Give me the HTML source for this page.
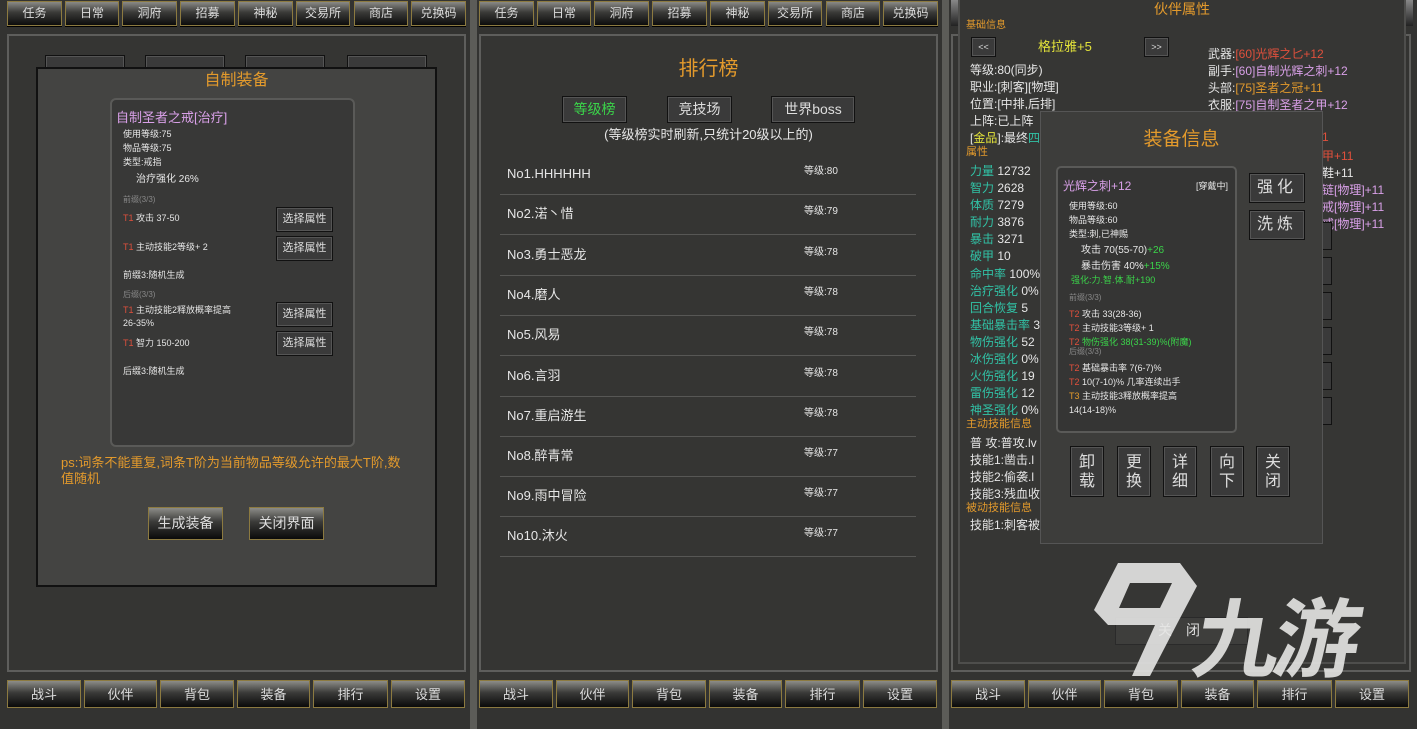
<!DOCTYPE html>
<html><head><meta charset="utf-8"><style>
*{margin:0;padding:0;box-sizing:border-box}
body{width:1417px;height:729px;background:#333331;position:relative;overflow:hidden;font-family:"Liberation Sans","Noto Sans CJK SC",sans-serif;color:#e6e6e6}
div,span.a{position:absolute}
.t{position:absolute;white-space:nowrap;line-height:1}
.sep{top:0;height:729px;width:7px;background:#5c5c58}
.tab{height:25px;background:linear-gradient(#8a8a86,#3a3a38 45%,#0c0c0c);border:1px solid #8c7a40;color:#ddd;font-size:12px;text-align:center;line-height:23px;box-shadow:0 1px 0 #000}
.btab{height:28px;background:linear-gradient(#8c8c88,#3a3a38 45%,#0a0a0a);border:1px solid #8c7a40;color:#ddd;font-size:13px;text-align:center;line-height:28px}
.frame{border:2px solid #5e5e5c;background:#353533}
.gb{background:#3a3a3a;border:1px solid #111;box-shadow:inset 0 0 0 1px #555;color:#ddd;text-align:center}
.or{color:#e39a2c}.pk{color:#d9a0e8}.gr{color:#3bd44a}.cy{color:#31c2a6}.rd{color:#e0503c}.yl{color:#e2e23a}
</style></head><body>

<div class="sep" style="left:470px"></div>
<div class="sep" style="left:942px"></div>

<!-- ================= PANEL 1 ================= -->
<div class="tab" style="left:7px;top:1px;width:55px">任务</div>
<div class="tab" style="left:65px;top:1px;width:54px">日常</div>
<div class="tab" style="left:122px;top:1px;width:55px">洞府</div>
<div class="tab" style="left:180px;top:1px;width:55px">招募</div>
<div class="tab" style="left:238px;top:1px;width:55px">神秘</div>
<div class="tab" style="left:296px;top:1px;width:54px">交易所</div>
<div class="tab" style="left:354px;top:1px;width:54px">商店</div>
<div class="tab" style="left:411px;top:1px;width:55px">兑换码</div>

<div class="frame" style="left:7px;top:34px;width:459px;height:638px"></div>
<div class="gb" style="left:45px;top:55px;width:80px;height:16px"></div>
<div class="gb" style="left:145px;top:55px;width:80px;height:16px"></div>
<div class="gb" style="left:245px;top:55px;width:80px;height:16px"></div>
<div class="gb" style="left:347px;top:55px;width:80px;height:16px"></div>

<div style="left:36px;top:67px;width:401px;height:520px;background:#444442;border:2px solid #111"></div>
<div class="t or" style="left:36px;width:401px;text-align:center;top:73px;font-size:16px">自制装备</div>
<div style="left:110px;top:98px;width:245px;height:349px;background:#383837;border:2px solid #5a5a58;border-radius:6px"></div>
<div class="t pk" style="left:116px;top:111px;font-size:13px">自制圣者之戒[治疗]</div>
<div class="t" style="left:123px;top:130px;font-size:9px">使用等级:75</div>
<div class="t" style="left:123px;top:144px;font-size:9px">物品等级:75</div>
<div class="t" style="left:123px;top:158px;font-size:9px">类型:戒指</div>
<div class="t" style="left:136px;top:175px;font-size:10px">治疗强化 26%</div>
<div class="t" style="left:123px;top:196px;font-size:8px;color:#888">前缀(3/3)</div>
<div class="t" style="left:123px;top:214px;font-size:9px"><span class="rd">T1</span> 攻击 37-50</div>
<div class="t" style="left:123px;top:243px;font-size:9px"><span class="rd">T1</span> 主动技能2等级+ 2</div>
<div class="t" style="left:123px;top:271px;font-size:9px">前缀3:随机生成</div>
<div class="t" style="left:123px;top:291px;font-size:8px;color:#888">后缀(3/3)</div>
<div class="t" style="left:123px;top:304px;font-size:9px;line-height:13px"><span class="rd">T1</span> 主动技能2释放概率提高<br>26-35%</div>
<div class="t" style="left:123px;top:339px;font-size:9px"><span class="rd">T1</span> 智力 150-200</div>
<div class="t" style="left:123px;top:367px;font-size:9px">后缀3:随机生成</div>
<div class="gb" style="left:276px;top:207px;width:57px;height:25px;line-height:23px;font-size:11px">选择属性</div>
<div class="gb" style="left:276px;top:236px;width:57px;height:25px;line-height:23px;font-size:11px">选择属性</div>
<div class="gb" style="left:276px;top:302px;width:57px;height:25px;line-height:23px;font-size:11px">选择属性</div>
<div class="gb" style="left:276px;top:331px;width:57px;height:25px;line-height:23px;font-size:11px">选择属性</div>
<div class="t or" style="left:61px;top:455px;font-size:13px;line-height:16px">ps:词条不能重复,词条T阶为当前物品等级允许的最大T阶,数<br>值随机</div>
<div class="btab" style="left:148px;top:507px;width:75px;height:33px;line-height:31px;font-size:14px">生成装备</div>
<div class="btab" style="left:249px;top:507px;width:75px;height:33px;line-height:31px;font-size:14px">关闭界面</div>

<div class="btab" style="left:7px;top:680px;width:74px">战斗</div>
<div class="btab" style="left:84px;top:680px;width:73px">伙伴</div>
<div class="btab" style="left:160px;top:680px;width:74px">背包</div>
<div class="btab" style="left:237px;top:680px;width:73px">装备</div>
<div class="btab" style="left:313px;top:680px;width:75px">排行</div>
<div class="btab" style="left:391px;top:680px;width:74px">设置</div>

<!-- ================= PANEL 2 ================= -->
<div class="tab" style="left:479px;top:1px;width:55px">任务</div>
<div class="tab" style="left:537px;top:1px;width:54px">日常</div>
<div class="tab" style="left:594px;top:1px;width:55px">洞府</div>
<div class="tab" style="left:652px;top:1px;width:55px">招募</div>
<div class="tab" style="left:710px;top:1px;width:55px">神秘</div>
<div class="tab" style="left:768px;top:1px;width:54px">交易所</div>
<div class="tab" style="left:826px;top:1px;width:54px">商店</div>
<div class="tab" style="left:883px;top:1px;width:55px">兑换码</div>

<div class="frame" style="left:479px;top:34px;width:459px;height:638px"></div>
<div class="t or" style="left:479px;width:459px;text-align:center;top:59px;font-size:20px">排行榜</div>
<div class="gb" style="left:562px;top:96px;width:65px;height:27px;line-height:25px;font-size:14px;color:#3bd44a">等级榜</div>
<div class="gb" style="left:667px;top:96px;width:65px;height:27px;line-height:25px;font-size:14px">竞技场</div>
<div class="gb" style="left:771px;top:96px;width:84px;height:27px;line-height:25px;font-size:14px">世界boss</div>
<div class="t" style="left:479px;width:459px;text-align:center;top:128px;font-size:13px">(等级榜实时刷新,只统计20级以上的)</div>

<div class="t" style="left:507px;top:167px;font-size:13px">No1.HHHHHH</div><div class="t" style="left:804px;top:167px;font-size:10px">等级:80</div>
<div style="left:500px;top:194px;width:416px;height:1px;background:#575755"></div>
<div class="t" style="left:507px;top:207px;font-size:13px">No2.渃丶惜</div><div class="t" style="left:804px;top:207px;font-size:10px">等级:79</div>
<div style="left:500px;top:234px;width:416px;height:1px;background:#575755"></div>
<div class="t" style="left:507px;top:248px;font-size:13px">No3.勇士恶龙</div><div class="t" style="left:804px;top:248px;font-size:10px">等级:78</div>
<div style="left:500px;top:275px;width:416px;height:1px;background:#575755"></div>
<div class="t" style="left:507px;top:288px;font-size:13px">No4.磨人</div><div class="t" style="left:804px;top:288px;font-size:10px">等级:78</div>
<div style="left:500px;top:315px;width:416px;height:1px;background:#575755"></div>
<div class="t" style="left:507px;top:328px;font-size:13px">No5.风易</div><div class="t" style="left:804px;top:328px;font-size:10px">等级:78</div>
<div style="left:500px;top:355px;width:416px;height:1px;background:#575755"></div>
<div class="t" style="left:507px;top:369px;font-size:13px">No6.言羽</div><div class="t" style="left:804px;top:369px;font-size:10px">等级:78</div>
<div style="left:500px;top:396px;width:416px;height:1px;background:#575755"></div>
<div class="t" style="left:507px;top:409px;font-size:13px">No7.重启游生</div><div class="t" style="left:804px;top:409px;font-size:10px">等级:78</div>
<div style="left:500px;top:436px;width:416px;height:1px;background:#575755"></div>
<div class="t" style="left:507px;top:449px;font-size:13px">No8.醉青常</div><div class="t" style="left:804px;top:449px;font-size:10px">等级:77</div>
<div style="left:500px;top:476px;width:416px;height:1px;background:#575755"></div>
<div class="t" style="left:507px;top:489px;font-size:13px">No9.雨中冒险</div><div class="t" style="left:804px;top:489px;font-size:10px">等级:77</div>
<div style="left:500px;top:516px;width:416px;height:1px;background:#575755"></div>
<div class="t" style="left:507px;top:529px;font-size:13px">No10.沐火</div><div class="t" style="left:804px;top:529px;font-size:10px">等级:77</div>
<div style="left:500px;top:556px;width:416px;height:1px;background:#575755"></div>

<div class="btab" style="left:479px;top:680px;width:74px">战斗</div>
<div class="btab" style="left:556px;top:680px;width:73px">伙伴</div>
<div class="btab" style="left:632px;top:680px;width:74px">背包</div>
<div class="btab" style="left:709px;top:680px;width:73px">装备</div>
<div class="btab" style="left:785px;top:680px;width:75px">排行</div>
<div class="btab" style="left:863px;top:680px;width:74px">设置</div>

<!-- ================= PANEL 3 ================= -->
<div style="left:951px;top:0;width:7px;height:26px;background:linear-gradient(#888,#222)"></div>
<div style="left:1406px;top:0;width:7px;height:26px;background:linear-gradient(#888,#222)"></div>
<div class="frame" style="left:951px;top:34px;width:460px;height:638px;background:#333331"></div>
<div style="left:958px;top:0;width:448px;height:664px;background:#363634;border:2px solid #4e4e4c;border-top:none"></div>
<div class="t or" style="left:958px;width:448px;text-align:center;top:2px;font-size:14px">伙伴属性</div>
<div class="t or" style="left:966px;top:21px;font-size:10px">基础信息</div>
<div class="gb" style="left:971px;top:37px;width:25px;height:20px;line-height:18px;font-size:9px">&lt;&lt;</div>
<div class="gb" style="left:1144px;top:37px;width:25px;height:20px;line-height:18px;font-size:9px">&gt;&gt;</div>
<div class="t yl" style="left:1038px;top:40px;font-size:13px">格拉雅+5</div>
<div class="t" style="left:970px;top:62px;font-size:12px;line-height:17px">等级:80(同步)<br>职业:[刺客][物理]<br>位置:[中排,后排]<br>上阵:已上阵<br>[<span class="yl">金品</span>]:最终<span class="cy">四</span></div>
<div class="t or" style="left:966px;top:147px;font-size:11px">属性</div>
<div class="t" style="left:970px;top:163px;font-size:12px;line-height:17.1px"><span class="cy">力量</span> 12732<br><span class="cy">智力</span> 2628<br><span class="cy">体质</span> 7279<br><span class="cy">耐力</span> 3876<br><span class="cy">暴击</span> 3271<br><span class="cy">破甲</span> 10<br><span class="cy">命中率</span> 100%<br><span class="cy">治疗强化</span> 0%<br><span class="cy">回合恢复</span> 5<br><span class="cy">基础暴击率</span> 3<br><span class="cy">物伤强化</span> 52<br><span class="cy">冰伤强化</span> 0%<br><span class="cy">火伤强化</span> 19<br><span class="cy">雷伤强化</span> 12<br><span class="cy">神圣强化</span> 0%</div>
<div class="t or" style="left:966px;top:419px;font-size:11px">主动技能信息</div>
<div class="t" style="left:970px;top:435px;font-size:12px;line-height:17px">普 攻:普攻.lv<br>技能1:凿击.l<br>技能2:偷袭.l<br>技能3:残血收</div>
<div class="t or" style="left:966px;top:503px;font-size:11px">被动技能信息</div>
<div class="t" style="left:970px;top:519px;font-size:12px">技能1:刺客被</div>

<div class="t" style="left:1208px;top:46px;font-size:12px;line-height:17px">武器:<span class="rd">[60]光辉之匕+12</span><br>副手:<span class="pk">[60]自制光辉之刺+12</span><br>头部:<span class="or">[75]圣者之冠+11</span><br>衣服:<span class="pk">[75]自制圣者之甲+12</span></div>
<div class="t rd" style="left:1322px;top:131px;font-size:12px">1</div>
<div class="t" style="left:1322px;top:148px;font-size:12px;line-height:17px"><span class="rd">甲+11</span><br>鞋+11<br><span class="pk">链[物理]+11<br>戒[物理]+11<br>戒[物理]+11</span></div>
<div style="left:1318px;top:222px;width:14px;height:28px;border:1px solid #111;border-left:none;background:#3a3a3a"></div>
<div style="left:1318px;top:257px;width:14px;height:28px;border:1px solid #111;border-left:none;background:#3a3a3a"></div>
<div style="left:1318px;top:292px;width:14px;height:28px;border:1px solid #111;border-left:none;background:#3a3a3a"></div>
<div style="left:1318px;top:327px;width:14px;height:28px;border:1px solid #111;border-left:none;background:#3a3a3a"></div>
<div style="left:1318px;top:362px;width:14px;height:28px;border:1px solid #111;border-left:none;background:#3a3a3a"></div>
<div style="left:1318px;top:397px;width:14px;height:28px;border:1px solid #111;border-left:none;background:#3a3a3a"></div>

<div style="left:1040px;top:111px;width:283px;height:433px;background:#3d3d3b;border:1px solid #555"></div>
<div class="t or" style="left:1040px;width:283px;text-align:center;top:130px;font-size:19px">装备信息</div>
<div style="left:1056px;top:166px;width:181px;height:267px;background:#353534;border:2px solid #5a5a58;border-radius:5px"></div>
<div class="t pk" style="left:1063px;top:180px;font-size:12px">光辉之刺+12</div>
<div class="t" style="left:1196px;top:182px;font-size:9px">[穿戴中]</div>
<div class="t" style="left:1069px;top:199px;font-size:9px;line-height:14px">使用等级:60<br>物品等级:60<br>类型:刺,已神赐</div>
<div class="t" style="left:1081px;top:243px;font-size:10px;line-height:16px">攻击 70(55-70)<span class="gr">+26</span><br>暴击伤害 40%<span class="gr">+15%</span></div>
<div class="t gr" style="left:1071px;top:276px;font-size:9px">强化:力.智.体.耐+190</div>
<div class="t" style="left:1069px;top:294px;font-size:8px;color:#888">前缀(3/3)</div>
<div class="t" style="left:1069px;top:307px;font-size:9px;line-height:14px"><span class="rd">T2</span> 攻击 33(28-36)<br><span class="rd">T2</span> 主动技能3等级+ 1<br><span class="rd">T2</span> <span class="gr">物伤强化 38(31-39)%(附魔)</span></div>
<div class="t" style="left:1069px;top:348px;font-size:8px;color:#888">后缀(3/3)</div>
<div class="t" style="left:1069px;top:361px;font-size:9px;line-height:14px"><span class="rd">T2</span> 基础暴击率 7(6-7)%<br><span class="rd">T2</span> 10(7-10)% 几率连续出手<br><span class="or">T3</span> 主动技能3释放概率提高<br>14(14-18)%</div>
<div class="gb" style="left:1249px;top:173px;width:56px;height:30px;line-height:28px;font-size:16px;letter-spacing:4px">强化</div>
<div class="gb" style="left:1249px;top:210px;width:56px;height:30px;line-height:28px;font-size:16px;letter-spacing:4px">洗炼</div>
<div class="gb" style="left:1070px;top:446px;width:34px;height:51px;font-size:16px;line-height:19px;padding-top:6px">卸<br>载</div>
<div class="gb" style="left:1117px;top:446px;width:34px;height:51px;font-size:16px;line-height:19px;padding-top:6px">更<br>换</div>
<div class="gb" style="left:1163px;top:446px;width:34px;height:51px;font-size:16px;line-height:19px;padding-top:6px">详<br>细</div>
<div class="gb" style="left:1210px;top:446px;width:34px;height:51px;font-size:16px;line-height:19px;padding-top:6px">向<br>下</div>
<div class="gb" style="left:1256px;top:446px;width:34px;height:51px;font-size:16px;line-height:19px;padding-top:6px">关<br>闭</div>

<div style="left:1115px;top:617px;width:133px;height:28px;background:#3e3e3c;border:1px solid #2a2a2a"></div>
<div class="t" style="left:1158px;top:623px;font-size:14px;color:#ddd">关　闭</div>

<!-- watermark -->
<svg style="position:absolute;left:0;top:0" width="1417" height="729" viewBox="0 0 1417 729">
<path fill-rule="evenodd" fill="#e6e6e4" opacity="0.9" d="M1118,563 L1180,563 L1197,586 L1178,622 L1150,676 L1132,676 L1155,625 L1108,625 L1094,610 Z M1130,583 L1172,583 L1160,608 L1119,608 Z"/>
</svg>
<div class="t" style="left:1196px;top:590px;font-size:86px;font-weight:bold;color:#e6e6e4;opacity:0.9;transform:skewX(-10deg);font-family:'Noto Sans CJK SC',sans-serif;letter-spacing:-6px">九游</div>

<div class="btab" style="left:951px;top:680px;width:74px">战斗</div>
<div class="btab" style="left:1028px;top:680px;width:73px">伙伴</div>
<div class="btab" style="left:1104px;top:680px;width:74px">背包</div>
<div class="btab" style="left:1181px;top:680px;width:73px">装备</div>
<div class="btab" style="left:1257px;top:680px;width:75px">排行</div>
<div class="btab" style="left:1335px;top:680px;width:74px">设置</div>
</body></html>
